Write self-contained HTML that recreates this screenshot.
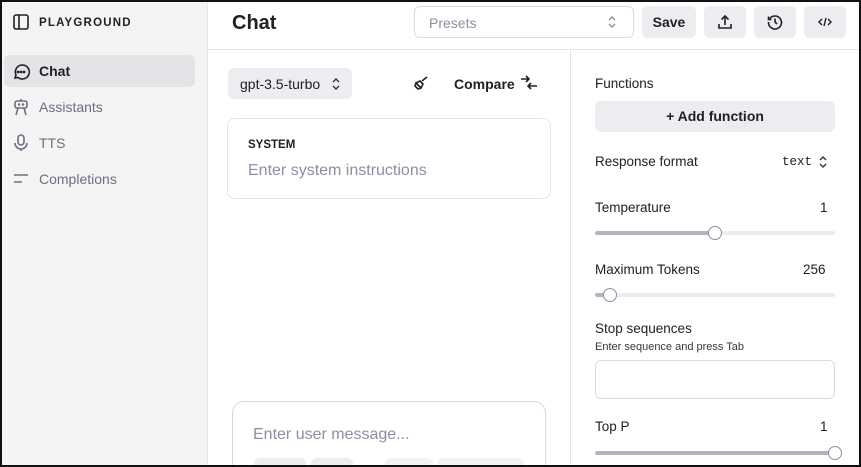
<!DOCTYPE html>
<html><head><style>
*{box-sizing:border-box;margin:0;padding:0}
html,body{width:861px;height:467px;overflow:hidden}
body{font-family:"Liberation Sans",sans-serif;color:#202123;background:#fff;position:relative}
.frame{position:absolute;left:0;top:0;width:861px;height:467px;border:2px solid #111;z-index:10;pointer-events:none}
.side{position:absolute;left:0;top:0;width:208px;height:467px;background:#f4f4f5;border-right:1px solid #e5e5e8}
.a{position:absolute}
.nav{position:absolute;left:4px;width:191px;height:32px;border-radius:6px;font-size:14px;display:flex;align-items:center;padding-left:35px;color:#6e6e80}
.hdr{position:absolute;left:208px;top:0;width:653px;height:50px;border-bottom:1px solid #e5e5e8}
.btn{position:absolute;top:6px;height:32px;border-radius:6px;background:#ececf1;display:flex;align-items:center;justify-content:center;font-size:14px;font-weight:bold}
.lbl{position:absolute;font-size:13.5px;color:#202123}
.track{position:absolute;left:595px;width:240px;height:4px;border-radius:2px;background:#ececf1}
.knob{position:absolute;width:14px;height:14px;border-radius:50%;border:1.5px solid #8e8ea0;background:#fff}
</style></head><body>
<div class="frame"></div>
<div class="side">
 <svg class="a" style="left:13px;top:14px" width="16" height="16" viewBox="0 0 16 16" fill="none" stroke="#202123" stroke-width="1.6"><rect x="1" y="1" width="14" height="14" rx="2"/><line x1="6" y1="1" x2="6" y2="15"/></svg>
 <div class="a" style="left:39px;top:17px;font-size:11.5px;font-weight:bold;letter-spacing:1.2px">PLAYGROUND</div>
 <div class="nav" style="top:55px;background:#e3e3e8;color:#202123;font-weight:bold">Chat</div>
 <svg class="a" style="left:12px;top:63px" width="18" height="18" viewBox="0 0 18 18" fill="none" stroke="#202123" stroke-width="1.6"><path d="M3 15 L4 12 A7 7 0 1 1 6 14.5 Z"/><circle cx="6" cy="9" r=".6" fill="#202123"/><circle cx="9" cy="9" r=".6" fill="#202123"/><circle cx="12" cy="9" r=".6" fill="#202123"/></svg>
 <div class="nav" style="top:91px">Assistants</div>
 <svg class="a" style="left:13px;top:98px" width="16" height="18" viewBox="0 0 16 18" fill="none" stroke="#6e6e80" stroke-width="1.6"><rect x="2" y="3" width="12" height="7" rx="2"/><line x1="8" y1="1" x2="8" y2="3"/><circle cx="6" cy="6.5" r=".5"/><circle cx="10" cy="6.5" r=".5"/><path d="M3 17 L5 10 M13 17 L11 10"/></svg>
 <div class="nav" style="top:127px">TTS</div>
 <svg class="a" style="left:14px;top:134px" width="14" height="18" viewBox="0 0 14 18" fill="none" stroke="#6e6e80" stroke-width="1.6"><rect x="4" y="1" width="6" height="10" rx="3"/><path d="M1 9 A6 6 0 0 0 13 9 M7 15 V17"/></svg>
 <div class="nav" style="top:163px">Completions</div>
 <svg class="a" style="left:13px;top:173px" width="16" height="12" viewBox="0 0 16 12" fill="none" stroke="#6e6e80" stroke-width="1.6"><path d="M1 2H15M1 9H9"/></svg>
</div>
<div class="hdr"></div>
<div class="a" style="left:232px;top:12px;font-size:20px;font-weight:bold">Chat</div>
<div class="a" style="left:414px;top:6px;width:220px;height:32px;border:1px solid #d9d9e3;border-radius:6px;font-size:14px;color:#8e8ea0;padding:8px 14px">Presets</div>
<svg class="a" style="left:607px;top:15px" width="10" height="14" viewBox="0 0 10 14" fill="none" stroke="#8e8ea0" stroke-width="1.4"><path d="M2 5L5 2L8 5M2 9L5 12L8 9"/></svg>
<div class="btn" style="left:642px;width:54px">Save</div>
<div class="btn" style="left:704px;width:42px"><svg width="16" height="16" viewBox="0 0 16 16" fill="none" stroke="#202123" stroke-width="1.6"><path d="M8 11V2M4.5 5.5L8 2l3.5 3.5M2 10v4h12v-4"/></svg></div>
<div class="btn" style="left:754px;width:42px"><svg width="16" height="16" viewBox="0 0 16 16" fill="none" stroke="#202123" stroke-width="1.6"><path d="M2.5 5A6.5 6.5 0 1 1 1.5 8M1.5 2.5V5.5H4.5M8 4.5V8l2 2"/></svg></div>
<div class="btn" style="left:804px;width:42px"><svg width="14" height="10" viewBox="0 0 14 10" fill="none" stroke="#202123" stroke-width="1.4"><path d="M4 2L1 5L4 8M10 2L13 5L10 8M8 1L6 9"/></svg></div>
<div class="a" style="left:570px;top:50px;width:1px;height:417px;background:#e5e5e8"></div>
<div class="a" style="left:228px;top:68px;width:124px;height:31px;border-radius:6px;background:#ececf1;font-size:14px;padding:8px 12px">gpt-3.5-turbo</div>
<svg class="a" style="left:331px;top:77px" width="10" height="14" viewBox="0 0 10 14" fill="none" stroke="#333" stroke-width="1.4"><path d="M2 5L5 2L8 5M2 9L5 12L8 9"/></svg>
<svg class="a" style="left:413px;top:75px" width="16" height="16" viewBox="0 0 16 16" fill="none" stroke="#202123" stroke-width="1.6"><path d="M14 2L9 6M3 8l5 5 2-4-3-3z M3 8l-1 3 3 3 3-1"/></svg>
<div class="a" style="left:454px;top:76px;font-size:14px;font-weight:bold">Compare</div>
<svg class="a" style="left:520px;top:75px" width="18" height="16" viewBox="0 0 18 16" fill="none" stroke="#202123" stroke-width="1.6"><path d="M1 4H9M6 1L9 4L6 7M17 11H8M11 8L8 11L11 14"/></svg>
<div class="a" style="left:227px;top:118px;width:324px;height:81px;border:1px solid #e5e5e8;border-radius:8px"></div>
<div class="a" style="left:248px;top:139px;font-size:11.5px;font-weight:bold">SYSTEM</div>
<div class="a" style="left:248px;top:162px;font-size:16px;color:#8e8ea0">Enter system instructions</div>
<div class="a" style="left:232px;top:401px;width:314px;height:80px;border:1px solid #d9d9e3;border-radius:12px"></div>
<div class="a" style="left:253px;top:426px;font-size:16px;color:#8e8ea0">Enter user message...</div>
<div class="a" style="left:254px;top:458px;width:52px;height:12px;background:#ececf1;border-radius:6px"></div>
<div class="a" style="left:311px;top:458px;width:42px;height:12px;background:#ececf1;border-radius:6px"></div>
<div class="a" style="left:385px;top:458px;width:48px;height:12px;background:#f2f2f5;border-radius:6px"></div>
<div class="a" style="left:437px;top:458px;width:87px;height:12px;background:#f2f2f5;border-radius:6px"></div>

<div class="lbl" style="left:595px;top:76px">Functions</div>
<div class="a" style="left:595px;top:101px;width:240px;height:31px;border-radius:6px;background:#ececf1;font-size:14px;font-weight:bold;text-align:center;line-height:31px">+ Add function</div>
<div class="lbl" style="left:595px;top:154px">Response format</div>
<div class="a" style="left:782px;top:155px;font-family:'Liberation Mono',monospace;font-size:12.5px">text</div>
<svg class="a" style="left:818px;top:155px" width="10" height="14" viewBox="0 0 10 14" fill="none" stroke="#333" stroke-width="1.4"><path d="M2 5L5 2L8 5M2 9L5 12L8 9"/></svg>
<div class="lbl" style="left:595px;top:200px">Temperature</div>
<div class="lbl" style="left:820px;top:200px">1</div>
<div class="track" style="top:231px"></div><div class="a" style="left:595px;top:231px;width:120px;height:4px;background:#b4b4c0;border-radius:2px"></div>
<div class="knob" style="left:708px;top:226px"></div>
<div class="lbl" style="left:595px;top:262px">Maximum Tokens</div>
<div class="lbl" style="left:803px;top:262px">256</div>
<div class="track" style="top:293px"></div><div class="a" style="left:595px;top:293px;width:14px;height:4px;background:#b4b4c0;border-radius:2px"></div>
<div class="knob" style="left:603px;top:288px"></div>
<div class="lbl" style="left:595px;top:321px">Stop sequences</div>
<div class="a" style="left:595px;top:341px;font-size:11px;color:#353740">Enter sequence and press Tab</div>
<div class="a" style="left:595px;top:360px;width:240px;height:39px;border:1px solid #d9d9e3;border-radius:6px"></div>
<div class="lbl" style="left:595px;top:419px">Top P</div>
<div class="lbl" style="left:820px;top:419px">1</div>
<div class="a" style="left:595px;top:451px;width:240px;height:4px;background:#b4b4c0;border-radius:2px"></div>
<div class="knob" style="left:828px;top:446px"></div>
</body></html>
